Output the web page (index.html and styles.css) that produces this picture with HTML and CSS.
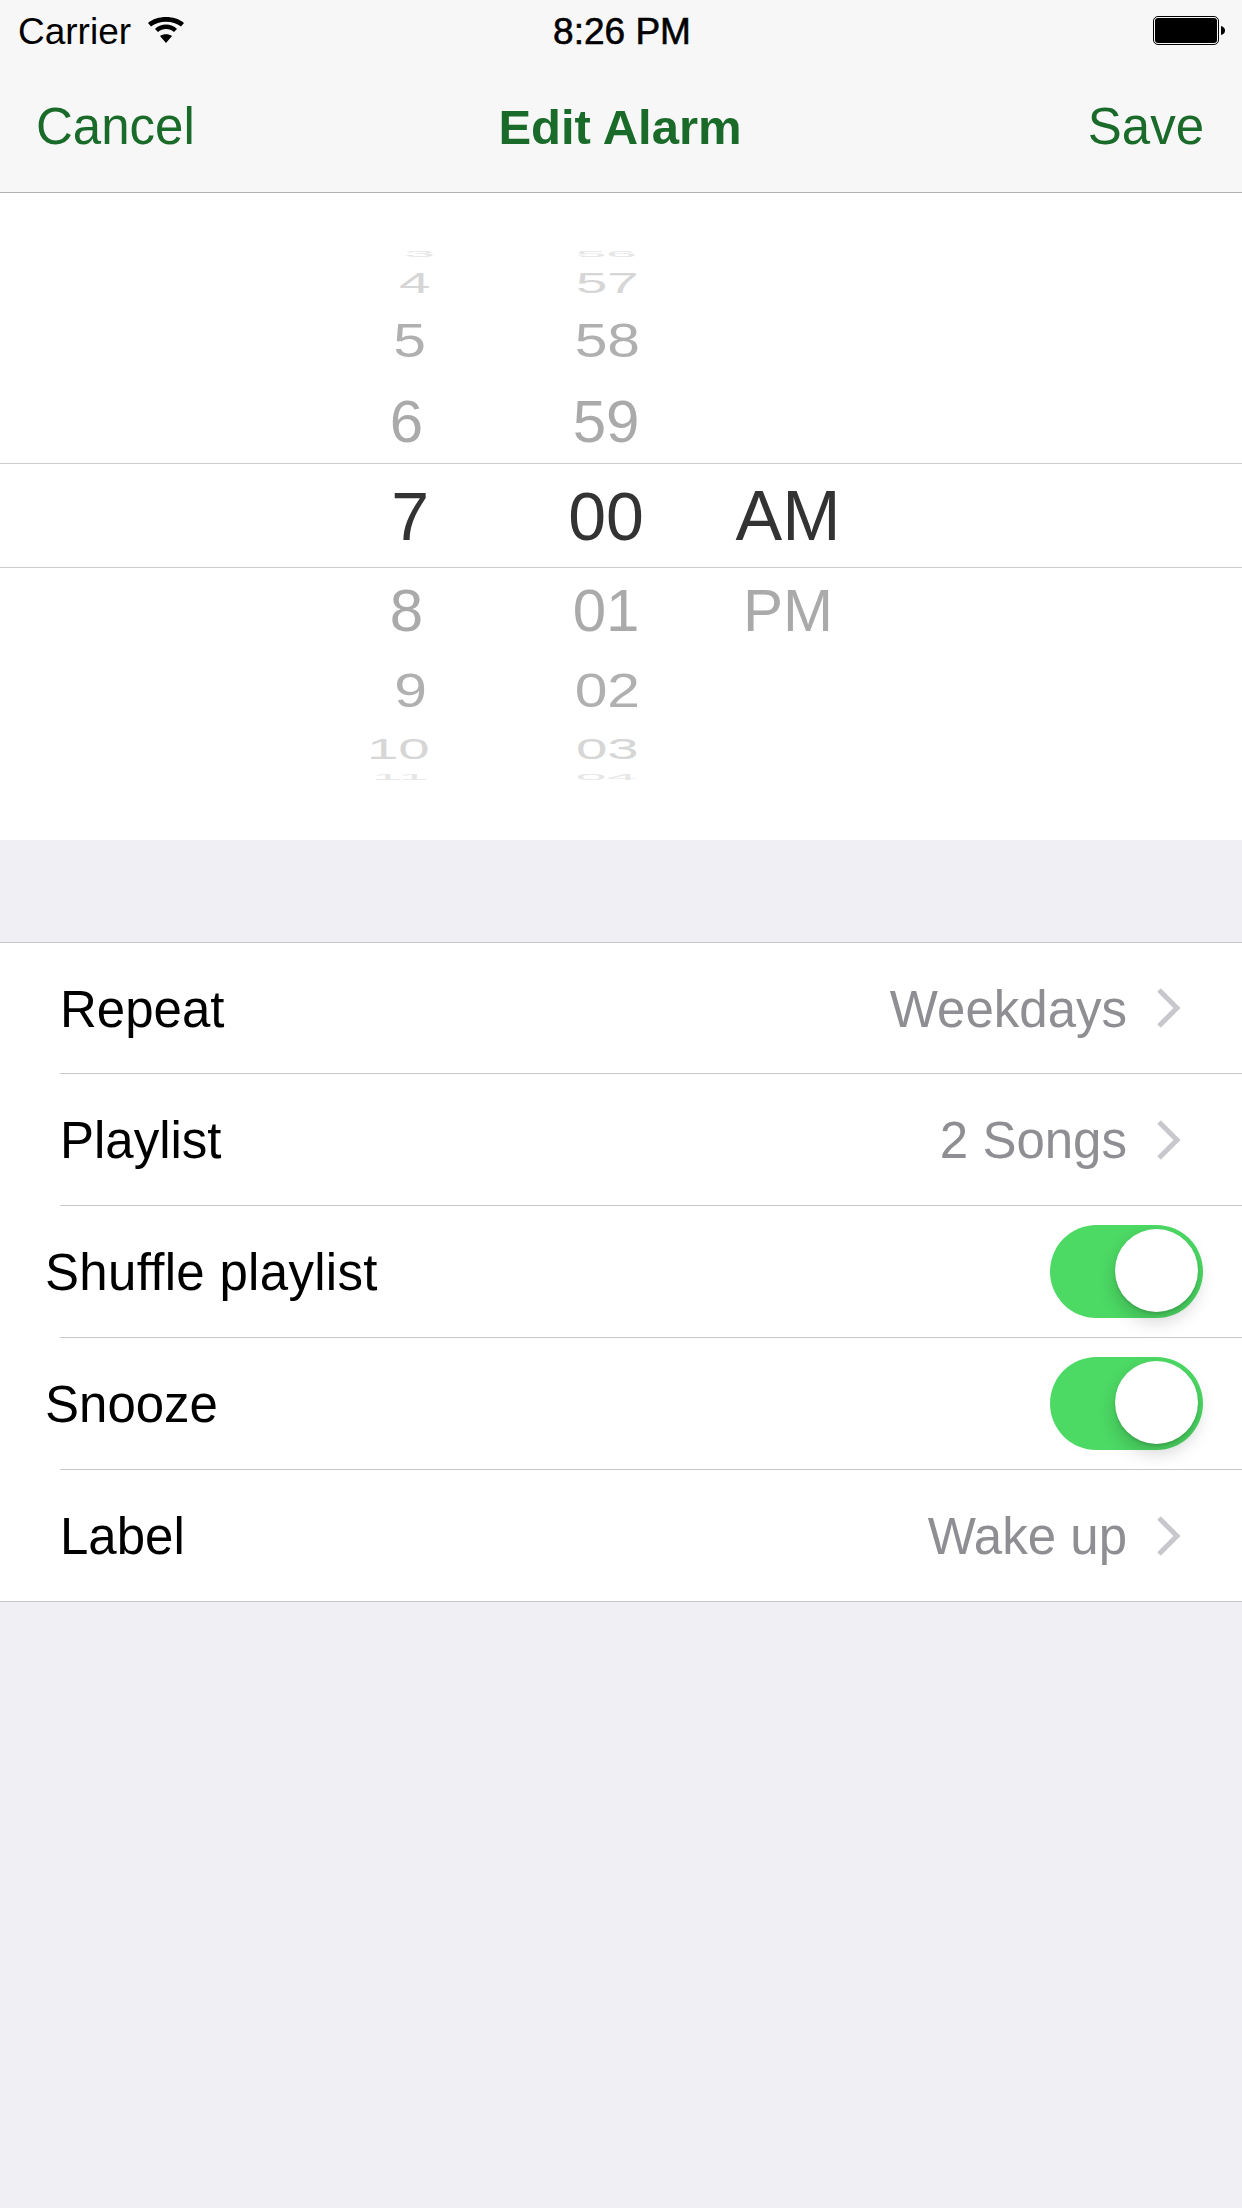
FILE: index.html
```html
<!DOCTYPE html>
<html lang="en">

<head>
    <meta charset="UTF-8">
    <meta name="viewport" content="width=device-width, initial-scale=1.0">
    <title>Edit Alarm</title>
    <link rel="stylesheet" href="styles.css">
</head>

<body>
    <header class="top">
        <div class="status">
            <div class="status-left">
                <span>Carrier</span>
                <svg class="wifi" width="36" height="26" viewBox="0 0 36 26">
                    <path d="M0 6 C9 -2 27 -2 36 6 L33 9.500 C25 3 11 3 3 9.500 Z" />
                    <path d="M7 12 C12 6 24 6 29 12 L26 15 C22 11 14 11 10 15 Z" />
                    <path d="M12 19 C15 16.500 21 16.500 24 19 L18 26 Z" />
                </svg>
            </div>
            <span class="clock">8:26 PM</span>
            <svg class="battery" width="74" height="30" viewBox="0 0 74 30">
                <rect x="1.500" y="0.500" width="65" height="28" rx="4.500" fill="none" stroke="#000" />
                <rect x="3" y="2" width="62" height="25" rx="3" />
                <path d="M69 10 C72 11 73 12.500 73 14.500 C73 16.500 72 18 69 19 Z" />
            </svg>
        </div>
        <nav class="nav">
            <a class="nav-btn">Cancel</a>
            <h1>Edit Alarm</h1>
            <a class="nav-btn">Save</a>
        </nav>
    </header>

    <section class="picker">
        <div class="wheel">
            <div class="col col-hour">
                <div class="cell edge h1"><span>3</span></div>
                <div class="cell far h2"><span>4</span></div>
                <div class="cell mid h3"><span>5</span></div>
                <div class="cell near h4"><span>6</span></div>
                <div class="cell sel h5"><span>7</span></div>
                <div class="cell near h6"><span>8</span></div>
                <div class="cell mid low h7"><span>9</span></div>
                <div class="cell far low h8"><span>10</span></div>
                <div class="cell edge low h9"><span>11</span></div>
            </div>
            <div class="col col-min">
                <div class="cell edge"><span>56</span></div>
                <div class="cell far"><span>57</span></div>
                <div class="cell mid"><span>58</span></div>
                <div class="cell near"><span>59</span></div>
                <div class="cell sel"><span>00</span></div>
                <div class="cell near"><span>01</span></div>
                <div class="cell mid low"><span>02</span></div>
                <div class="cell far low"><span>03</span></div>
                <div class="cell edge low"><span>04</span></div>
            </div>
            <div class="col col-ampm">
                <div class="cell edge"></div>
                <div class="cell far"></div>
                <div class="cell mid"></div>
                <div class="cell near"></div>
                <div class="cell sel"><span>AM</span></div>
                <div class="cell near"><span>PM</span></div>
            </div>
        </div>
    </section>

    <section class="list">
        <div class="row">
            <div class="row-inner">
                <span class="label">Repeat</span>
                <span class="value">Weekdays</span>
                <svg class="chevron" width="26" height="42" viewBox="0 0 26 42"><path d="M3 3 L21 21 L3 39" /></svg>
            </div>
        </div>
        <div class="row">
            <div class="row-inner">
                <span class="label">Playlist</span>
                <span class="value">2 Songs</span>
                <svg class="chevron" width="26" height="42" viewBox="0 0 26 42"><path d="M3 3 L21 21 L3 39" /></svg>
            </div>
        </div>
        <div class="row">
            <div class="row-inner">
                <span class="label outdent shuffle">Shuffle playlist</span>
                <div class="toggle"><div class="knob"></div></div>
            </div>
        </div>
        <div class="row">
            <div class="row-inner">
                <span class="label outdent">Snooze</span>
                <div class="toggle"><div class="knob"></div></div>
            </div>
        </div>
        <div class="row">
            <div class="row-inner">
                <span class="label">Label</span>
                <span class="value">Wake up</span>
                <svg class="chevron" width="26" height="42" viewBox="0 0 26 42"><path d="M3 3 L21 21 L3 39" /></svg>
            </div>
        </div>
    </section>
</body>

</html>
```

FILE: styles.css
```css
html,
body {
    margin: 0;
    padding: 0;
}

body {
    width: 1242px;
    height: 2208px;
    overflow: hidden;
    background-color: #efeff4;
    font-family: 'Liberation Sans', Arial, sans-serif;
    font-variant-ligatures: none;
    color: #000;
}

/* status bar + nav */
.top {
    height: 192px;
    background-color: #f7f7f7;
    border-bottom: 1px solid #b2b2b2;
}

.status {
    height: 64px;
    padding: 0 16px 0 18px;
    display: grid;
    grid-template-columns: 1fr auto 1fr;
    align-items: center;
    font-size: 37px;
}

.status-left {
    display: flex;
    align-items: center;
    gap: 17px;
}

.wifi {
    fill: #000;
    margin-top: -4px;
}

.clock {
    -webkit-text-stroke: 0.6px #000;
}

.battery {
    justify-self: end;
    fill: #000;
    margin-top: -2px;
}

.nav {
    height: 128px;
    padding: 0 38px 3px 36px;
    box-sizing: border-box;
    display: grid;
    grid-template-columns: 1fr auto 1fr;
    align-items: center;
    color: #1a6b2a;
    font-size: 51px;
}

.nav h1 {
    margin: 0;
    font-size: 49px;
    font-weight: bold;
}

.nav-btn:last-child {
    justify-self: end;
}

/* time picker */
.picker {
    height: 647px;
    background: #fff;
    padding-top: 51px;
    box-sizing: border-box;
}

.wheel {
    height: 541px;
    padding-left: 340px;
    display: flex;
    background: linear-gradient(#fff 219px, #ccc 219px, #ccc 220px, #fff 220px, #fff 323px, #ccc 323px, #ccc 324px, #fff 324px);
    overflow: hidden;
}

.col {
    display: flex;
    flex-direction: column;
    font-size: 60px;
    color: #aaa;
}

.col-hour {
    width: 96px;
    align-items: flex-end;
}

.col-min {
    width: 120px;
    margin-left: 110px;
    align-items: center;
}

.col-ampm {
    width: 120px;
    margin-left: 62px;
    align-items: center;
}

.cell {
    flex: none;
    display: flex;
    align-items: center;
}

.cell span {
    display: block;
    line-height: 1;
}

.edge {
    height: 20px;
    color: #e6e6e6;
}

.edge span {
    transform: scale(0.92, 0.14);
}

.edge.low {
    height: 17px;
}

.far {
    height: 38px;
    color: #d6d6d6;
}

.far span {
    transform: scale(0.94, 0.5);
}

.far.low {
    height: 39px;
}

.mid {
    height: 77px;
    color: #b0b0b0;
}

.mid span {
    transform: scale(0.98, 0.79);
}

.mid.low {
    height: 76px;
}

.near {
    height: 85px;
}

.sel {
    height: 104px;
    color: #333;
    font-size: 68px;
}

.col-ampm .sel {
    font-size: 70px;
}

.col-min .far,
.col-min .mid {
    padding-left: 3px;
}

/* little sideways drift of the hour digits */
.h1 { padding-right: 0; }
.h2 { padding-right: 5px; }
.h3 { padding-right: 10px; }
.h4 { padding-right: 13px; }
.h5 { padding-right: 7px; }
.h6 { padding-right: 13px; }
.h7 { padding-right: 9px; }
.h8 { padding-right: 4px; }
.h9 { padding-right: 5px; }

/* settings list */
.list {
    margin-top: 102px;
    background: #fff;
    border-top: 1px solid #c8c7cc;
    border-bottom: 1px solid #c8c7cc;
}

.row {
    height: 132px;
    padding-left: 60px;
    box-sizing: border-box;
}

.row:first-child,
.row:last-child {
    height: 131px;
}

.row-inner {
    height: 100%;
    box-sizing: border-box;
    padding: 2px 60px 0 0;
    display: flex;
    align-items: center;
    border-bottom: 1px solid #c8c7cc;
    font-size: 51px;
}

.row:last-child .row-inner {
    border-bottom: 0;
}

.label {
    flex: 1;
}

.outdent {
    margin-left: -15px;
}

.shuffle {
    letter-spacing: 0.3px;
}

.value {
    color: #8e8e93;
}

.chevron {
    margin-left: 29px;
    margin-top: -2px;
    fill: none;
    stroke: #c7c7cc;
    stroke-width: 5;
}

.toggle {
    width: 153px;
    height: 93px;
    margin: -2px -21px 0 0;
    border-radius: 47px;
    background-color: #4cd964;
    display: flex;
    align-items: center;
    justify-content: flex-end;
    padding: 0 5px 2px 0;
    box-sizing: border-box;
}

.knob {
    width: 83px;
    height: 83px;
    border-radius: 50%;
    background: #fff;
    box-shadow: 0 9px 18px rgba(0, 0, 0, 0.18), 0 2px 3px rgba(0, 0, 0, 0.12);
}
```
